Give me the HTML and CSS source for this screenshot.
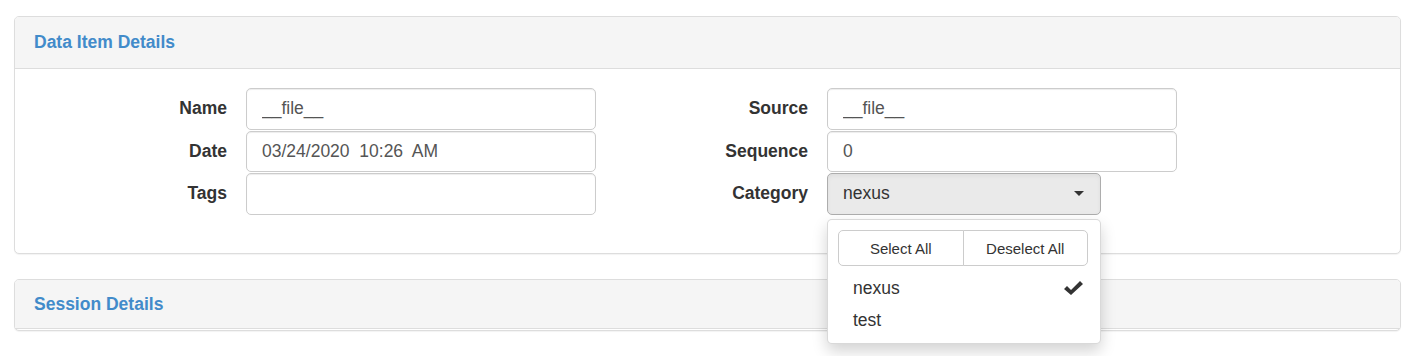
FILE: index.html
```html
<!DOCTYPE html>
<html lang="en">
<head>
<meta charset="utf-8">
<title>Data Item Details</title>
<link rel="stylesheet" href="styles.css">
</head>
<body>
<div class="page">
  <div class="panel">
    <div class="panel-heading"><h3 class="panel-title">Data Item Details</h3></div>
    <div class="panel-body">
      <div class="form-cols">
        <div class="form-col">
          <label class="control-label">Name</label>
          <input class="form-control" type="text" value="__file__">
          <label class="control-label">Date</label>
          <input class="form-control" type="text" value="03/24/2020  10:26  AM">
          <label class="control-label">Tags</label>
          <input class="form-control" type="text" value="">
        </div>
        <div class="form-col">
          <label class="control-label">Source</label>
          <input class="form-control" type="text" value="__file__">
          <label class="control-label">Sequence</label>
          <input class="form-control" type="text" value="0">
          <label class="control-label">Category</label>
          <div class="select-wrap">
            <div class="select-btn"><span>nexus</span><span class="caret"></span></div>
            <div class="dropdown-menu">
              <div class="actions">
                <button class="btn" type="button">Select All</button>
                <button class="btn" type="button">Deselect All</button>
              </div>
              <ul class="options">
                <li class="option selected"><span>nexus</span>
                  <svg class="check" width="19" height="14" viewBox="0 0 19 14"><path d="M0 8 L3 5 L7 9 L16 0 L19 3 L7 14 Z" fill="#333"/></svg>
                </li>
                <li class="option"><span>test</span></li>
              </ul>
            </div>
          </div>
        </div>
      </div>
    </div>
  </div>
  <div class="panel collapsed">
    <div class="panel-heading"><h3 class="panel-title">Session Details</h3></div>
    <div class="collapse-gap"></div>
  </div>
</div>
</body>
</html>
```
FILE: styles.css
```css
html, body {
  margin: 0;
  background: #fff;
}
body {
  font-family: "Liberation Sans", Arial, Helvetica, sans-serif;
  font-size: 17.5px;
  color: #333;
}
.page {
  padding: 16px 8px 0 14px;
}
.panel {
  border: 1px solid #ddd;
  border-radius: 5px;
  background: #fff;
  box-shadow: 0 1px 1px rgba(0, 0, 0, 0.05);
  margin-bottom: 25px;
}
.panel-heading {
  height: 52px;
  box-sizing: border-box;
  padding: 0 19px;
  background: #f5f5f5;
  border-bottom: 1px solid #ddd;
  border-radius: 4px 4px 0 0;
  display: flex;
  align-items: center;
}
.panel-title {
  margin: 0;
  font-size: 17.5px;
  font-weight: bold;
  color: #428bca;
}
.collapsed .panel-heading {
  height: 49px;
}
.collapse-gap {
  height: 1px;
}
.panel-body {
  padding: 19px 19px 38.5px;
}
.form-cols {
  display: flex;
  gap: 19px;
}
.form-col {
  display: grid;
  grid-template-columns: 193px 350px;
  grid-auto-rows: 41.5px;
  column-gap: 19px;
  row-gap: 1px;
}
.control-label {
  font-weight: bold;
  text-align: right;
  align-self: center;
  color: #333;
}
.form-control {
  box-sizing: border-box;
  width: 100%;
  height: 100%;
  margin: 0;
  padding: 0 15px;
  border: 1px solid #ccc;
  border-radius: 5px;
  font-family: "Liberation Sans", Arial, sans-serif;
  font-size: 17.5px;
  color: #555;
  background: #fff;
  box-shadow: inset 0 1px 1px rgba(0, 0, 0, 0.075);
}
.select-wrap {
  position: relative;
  width: 274px;
}
.select-btn {
  box-sizing: border-box;
  height: 100%;
  padding: 0 16px 0 15px;
  background: #eaeaea;
  border: 1px solid #adadad;
  border-radius: 5px;
  display: flex;
  align-items: center;
  justify-content: space-between;
  color: #333;
  box-shadow: inset 0 2px 4px rgba(0, 0, 0, 0.05);
}
.caret {
  width: 0;
  height: 0;
  border-top: 5px solid #333;
  border-left: 5px solid transparent;
  border-right: 5px solid transparent;
}
.dropdown-menu {
  position: absolute;
  top: 46px;
  left: 0;
  width: 274px;
  box-sizing: border-box;
  background: #fff;
  border: 1px solid rgba(0, 0, 0, 0.15);
  border-radius: 5px;
  box-shadow: 0 7px 15px rgba(0, 0, 0, 0.175);
  padding: 10px 0 6px;
  z-index: 10;
}
.actions {
  display: flex;
  margin: 0 12px 0 10px;
  height: 36px;
}
.btn {
  flex: 1;
  margin: 0;
  height: 36px;
  border: 1px solid #ccc;
  background: #fff;
  font-family: "Liberation Sans", Arial, sans-serif;
  font-size: 15px;
  color: #333;
  padding: 0;
}
.btn:first-child {
  border-radius: 5px 0 0 5px;
}
.btn:last-child {
  border-radius: 0 5px 5px 0;
  margin-left: -1px;
}
.options {
  list-style: none;
  margin: 6px 0 0;
  padding: 0;
}
.option {
  display: flex;
  align-items: center;
  justify-content: space-between;
  height: 32.5px;
  box-sizing: border-box;
  padding: 0 17px 0 25px;
  line-height: 25px;
  color: #333;
}
.check {
  display: block;
}
```
